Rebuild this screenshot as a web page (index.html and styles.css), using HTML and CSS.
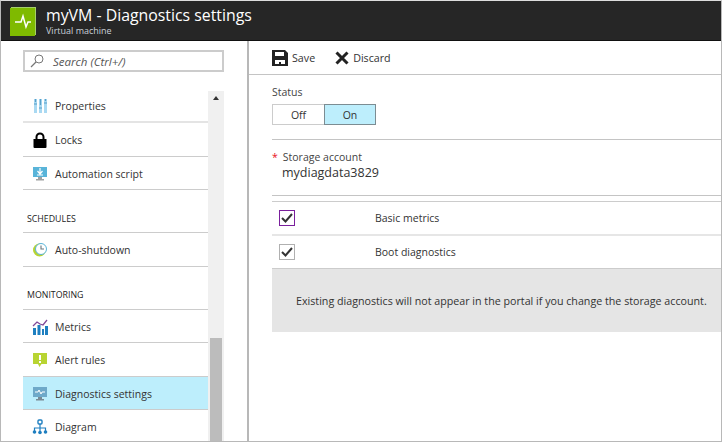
FILE: index.html
```html
<!DOCTYPE html>
<html>
<head>
  <meta charset="utf-8">
  <meta name="viewport" content="width=device-width">
  <title>myVM - Diagnostics settings</title>
  <link rel="stylesheet" href="styles.css">
</head>
<body>
<div class="frame">
  <div class="topbar">
    <svg class="logo" width="26" height="29" viewBox="0 0 26 29">
      <rect x="1" y="0" width="25" height="28" fill="#a5cf6a"/>
      <rect x="0" y="1" width="25" height="28" fill="#7fba00"/>
      <path d="M5 15h6l2-6 3 11 2-5h3" fill="none" stroke="#fff" stroke-width="1.5"/>
    </svg>
    <div>
      <div class="title">myVM - Diagnostics settings</div>
      <div class="subtitle">Virtual machine</div>
    </div>
  </div>

  <div class="main">
    <div class="sidebar">
      <div class="search">
        <svg width="14" height="14" viewBox="0 0 14 14"><circle cx="9" cy="5" r="4" fill="none" stroke="#777" stroke-width="1"/><path d="M6 8l-5 5" stroke="#777" stroke-width="1.2"/></svg>
        <span>Search (Ctrl+/)</span>
      </div>
      <div class="scroller">
        <div class="menu">
          <div class="item first">
            <svg class="icon" width="16" height="16" viewBox="0 0 16 16"><path d="M2 1h3v14H2zM7 1h3v14H7zM12 1h3v14h-3z" fill="#a9d9f2"/><path d="M2 6h3M7 10h3M12 5h3M3.500 1v3M8.500 1v6M13.500 1v2" stroke="#59a0c8" stroke-width="1.200"/></svg>
            Properties
          </div>
          <div class="item">
            <svg class="icon" width="16" height="16" viewBox="0 0 16 16"><path d="M1.500 7h13v8a1 1 0 0 1-1 1h-11a1 1 0 0 1-1-1z" fill="#000"/><path d="M4.500 8V5a3.500 3.500 0 0 1 7 0v3" fill="none" stroke="#000" stroke-width="2"/></svg>
            Locks
          </div>
          <div class="item">
            <svg class="icon" width="16" height="16" viewBox="0 0 16 16"><rect x="1" y="1" width="14" height="10" fill="#59b4d9"/><path d="M8 2v5M5.500 5L8 8l2.500-3M5 9h6" stroke="#fff" stroke-width="1.200" fill="none"/><path d="M6 11h4v2H6zM4 13h8v1.500H4z" fill="#a0a1a2"/></svg>
            Automation script
          </div>
          <div class="section">SCHEDULES</div>
          <div class="item">
            <svg class="icon" width="16" height="16" viewBox="0 0 16 16"><circle cx="7.500" cy="8" r="6.500" fill="#b8d432"/><circle cx="9" cy="7" r="5.500" fill="#fff" stroke="#59b4d9" stroke-width="1"/><path d="M9 3.500V7h3" fill="none" stroke="#68757d" stroke-width="1.100"/></svg>
            Auto-shutdown
          </div>
          <div class="section">MONITORING</div>
          <div class="item">
            <svg class="icon" width="16" height="16" viewBox="0 0 16 16"><path d="M1 9h3v7H1zM5.500 6h3v10h-3zM10 10h2v6h-2zM13 7h3v9h-3z" fill="#1e7fc0"/><path d="M1 7l4-4 3 2 3 1 4-5" fill="none" stroke="#804998" stroke-width="1.300"/></svg>
            Metrics
          </div>
          <div class="item">
            <svg class="icon" width="16" height="16" viewBox="0 0 16 16"><path d="M1 1h14v11H9.500L7.500 15 6 12H1z" fill="#b8d432"/><path d="M7 3h2v5H7zM7 9h2v2H7z" fill="#fff"/></svg>
            Alert rules
          </div>
          <div class="item selected">
            <svg class="icon" width="16" height="16" viewBox="0 0 16 16"><rect x="1" y="1" width="14" height="10" fill="#6fa9c9"/><path d="M3 6h3l1-2 2 4 1-2h3" fill="none" stroke="#fff" stroke-width="1"/><path d="M6 11h4v2H6zM4 13h8v1.500H4z" fill="#7a8a94"/></svg>
            Diagnostics settings
          </div>
          <div class="item">
            <svg class="icon" width="16" height="16" viewBox="0 0 16 16"><path d="M8 5v8M2.500 12V9h11v3" fill="none" stroke="#1e7fc0" stroke-width="1.200"/><rect x="6" y="1" width="4" height="4" rx="1" fill="none" stroke="#1e7fc0" stroke-width="1.400"/><circle cx="2.500" cy="13" r="1.800" fill="#1e7fc0"/><circle cx="8" cy="13.500" r="1.800" fill="#1e7fc0"/><circle cx="13.500" cy="13" r="1.800" fill="#1e7fc0"/></svg>
            Diagram
          </div>
        </div>
        <div class="scrollbar">
          <div class="arrow"></div>
          <div class="thumb"></div>
        </div>
      </div>
    </div>

    <div class="content">
      <div class="toolbar">
        <div class="tool">
          <svg width="16" height="16" viewBox="0 0 16 16"><path d="M0 0h13l3 3v13H0z" fill="#222"/><path d="M3 2h9v4H3zM3 10h10v4H3z" fill="#fff"/><rect x="7" y="12" width="2" height="2" fill="#222"/></svg>
          Save
        </div>
        <div class="tool">
          <svg width="14" height="14" viewBox="0 0 14 14"><path d="M1.500 1.500l11 11M12.500 1.500l-11 11" stroke="#222" stroke-width="3"/></svg>
          Discard
        </div>
      </div>
      <div class="status">
        <div class="label">Status</div>
        <div class="toggle">
          <div class="opt">Off</div>
          <div class="opt on">On</div>
        </div>
      </div>
      <div class="storage">
        <div class="label"><span class="req">*</span>Storage account</div>
        <div class="value">mydiagdata3829</div>
      </div>
      <div class="checks">
        <div class="check-row">
          <span class="box focus"><svg width="12" height="10" viewBox="0 0 12 10"><path d="M1 5l3.500 3.500L11 1" fill="none" stroke="#333" stroke-width="2"/></svg></span>
          <span>Basic metrics</span>
        </div>
        <div class="check-row">
          <span class="box"><svg width="12" height="10" viewBox="0 0 12 10"><path d="M1 5l3.500 3.500L11 1" fill="none" stroke="#333" stroke-width="2"/></svg></span>
          <span>Boot diagnostics</span>
        </div>
      </div>
      <div class="notice">Existing diagnostics will not appear in the portal if you change the storage account.</div>
    </div>
  </div>
</div>
</body>
</html>
```

FILE: styles.css
```css
* { box-sizing: border-box; }
body {
  margin: 0;
  font-family: "Open Sans", "Noto Sans", sans-serif;
  font-size: 10.5px;
  color: #333;
  background: #fff;
}
.frame {
  width: 722px;
  height: 442px;
  border: 1px solid #b8b8b8;
  border-top-color: #ddd;
  display: flex;
  flex-direction: column;
  overflow: hidden;
}

.topbar {
  height: 40px;
  flex: none;
  background: #262626;
  border-bottom: 1px solid #111;
  color: #fff;
  display: flex;
  align-items: center;
  gap: 10px;
  padding-left: 9px;
}
.logo { flex: none; margin-top: 1px; }
.title { font-size: 15.850px; line-height: 20px; margin-top: -1px; }
.subtitle { font-size: 9px; line-height: 11px; color: #c8d0d8; }

.main { flex: 1; display: flex; min-height: 0; }
.sidebar {
  width: 248px;
  flex: none;
  border-right: 2px solid #b8b8b8;
  padding: 9px 0 0 22px;
  display: flex;
  flex-direction: column;
  min-height: 0;
}
.search {
  width: 201px;
  height: 22px;
  flex: none;
  border: 2px solid #ccc;
  display: flex;
  align-items: center;
  gap: 9px;
  padding-left: 5px;
  font-size: 11.500px;
  font-style: italic;
  color: #555;
}
.scroller {
  margin-top: 19px;
  flex: 1;
  min-height: 0;
  display: flex;
  width: 201px;
}
.menu { width: 185px; flex: none; }
.item {
  height: 33.500px;
  border-bottom: 1px solid #ccc;
  display: flex;
  align-items: center;
  gap: 7px;
  padding: 2px 0 0 9px;
}
.item.first { height: 32px; padding-top: 0; border-bottom: 2px solid #e4e4e4; }
.item.selected { background: #bdeefc; }
.icon { flex: none; }
.section {
  height: 43px;
  border-bottom: 1px solid #ccc;
  padding: 22.500px 0 0 4px;
  font-size: 8.800px;
  line-height: 12px;
  color: #222;
}
.scrollbar {
  width: 16px;
  flex: none;
  background: #f0f0f0;
  display: flex;
  flex-direction: column;
  align-items: center;
}
.arrow {
  margin-top: 5px;
  border: 3.500px solid transparent;
  border-top: 0;
  border-bottom: 4px solid #333;
}
.thumb {
  margin-top: auto;
  width: 12px;
  height: 103px;
  background: #bcbcbc;
}

.content { flex: 1; min-width: 0; }
.toolbar {
  height: 34px;
  border-bottom: 1px solid #c4c4c4;
  display: flex;
  align-items: center;
  gap: 20px;
  padding: 1px 0 0 23px;
  font-size: 10.700px;
}
.tool { display: flex; align-items: center; gap: 4px; }
.label { color: #444; line-height: 14px; }
.status {
  margin-left: 23px;
  height: 65px;
  padding-top: 10px;
  border-bottom: 1px solid #c4c4c4;
}
.toggle { display: flex; margin-top: 5px; width: 104px; height: 21px; }
.opt {
  width: 52px;
  border: 1px solid #ccc;
  border-right: 0;
  display: flex;
  align-items: center;
  justify-content: center;
}
.opt.on { background: #bdeefc; border: 1px solid #7c8c92; }
.storage {
  margin-left: 23px;
  height: 56px;
  padding-top: 10px;
  border-bottom: 1px solid #c4c4c4;
}
.req { color: #e81123; margin-right: 5px; }
.value { font-size: 12.500px; line-height: 18px; padding-left: 10px; }
.checks { margin: 5px 0 0 23px; border-top: 1px solid #ccc; }
.check-row {
  height: 34px;
  display: flex;
  align-items: center;
  border-bottom: 2px solid #e6e6e6;
  padding-left: 7px;
}
.check-row:last-child { height: 33px; border-bottom: 1px solid #ccc; }
.box {
  width: 16px;
  height: 16px;
  border: 1px solid #b0b0b0;
  margin-right: 80px;
  display: flex;
  align-items: center;
  justify-content: center;
}
.box.focus { border-color: #7a1f9c; }
.notice {
  margin-left: 23px;
  height: 63px;
  background: #e5e5e5;
  display: flex;
  align-items: center;
  padding-left: 24px;
  font-size: 10.700px;
}
```
